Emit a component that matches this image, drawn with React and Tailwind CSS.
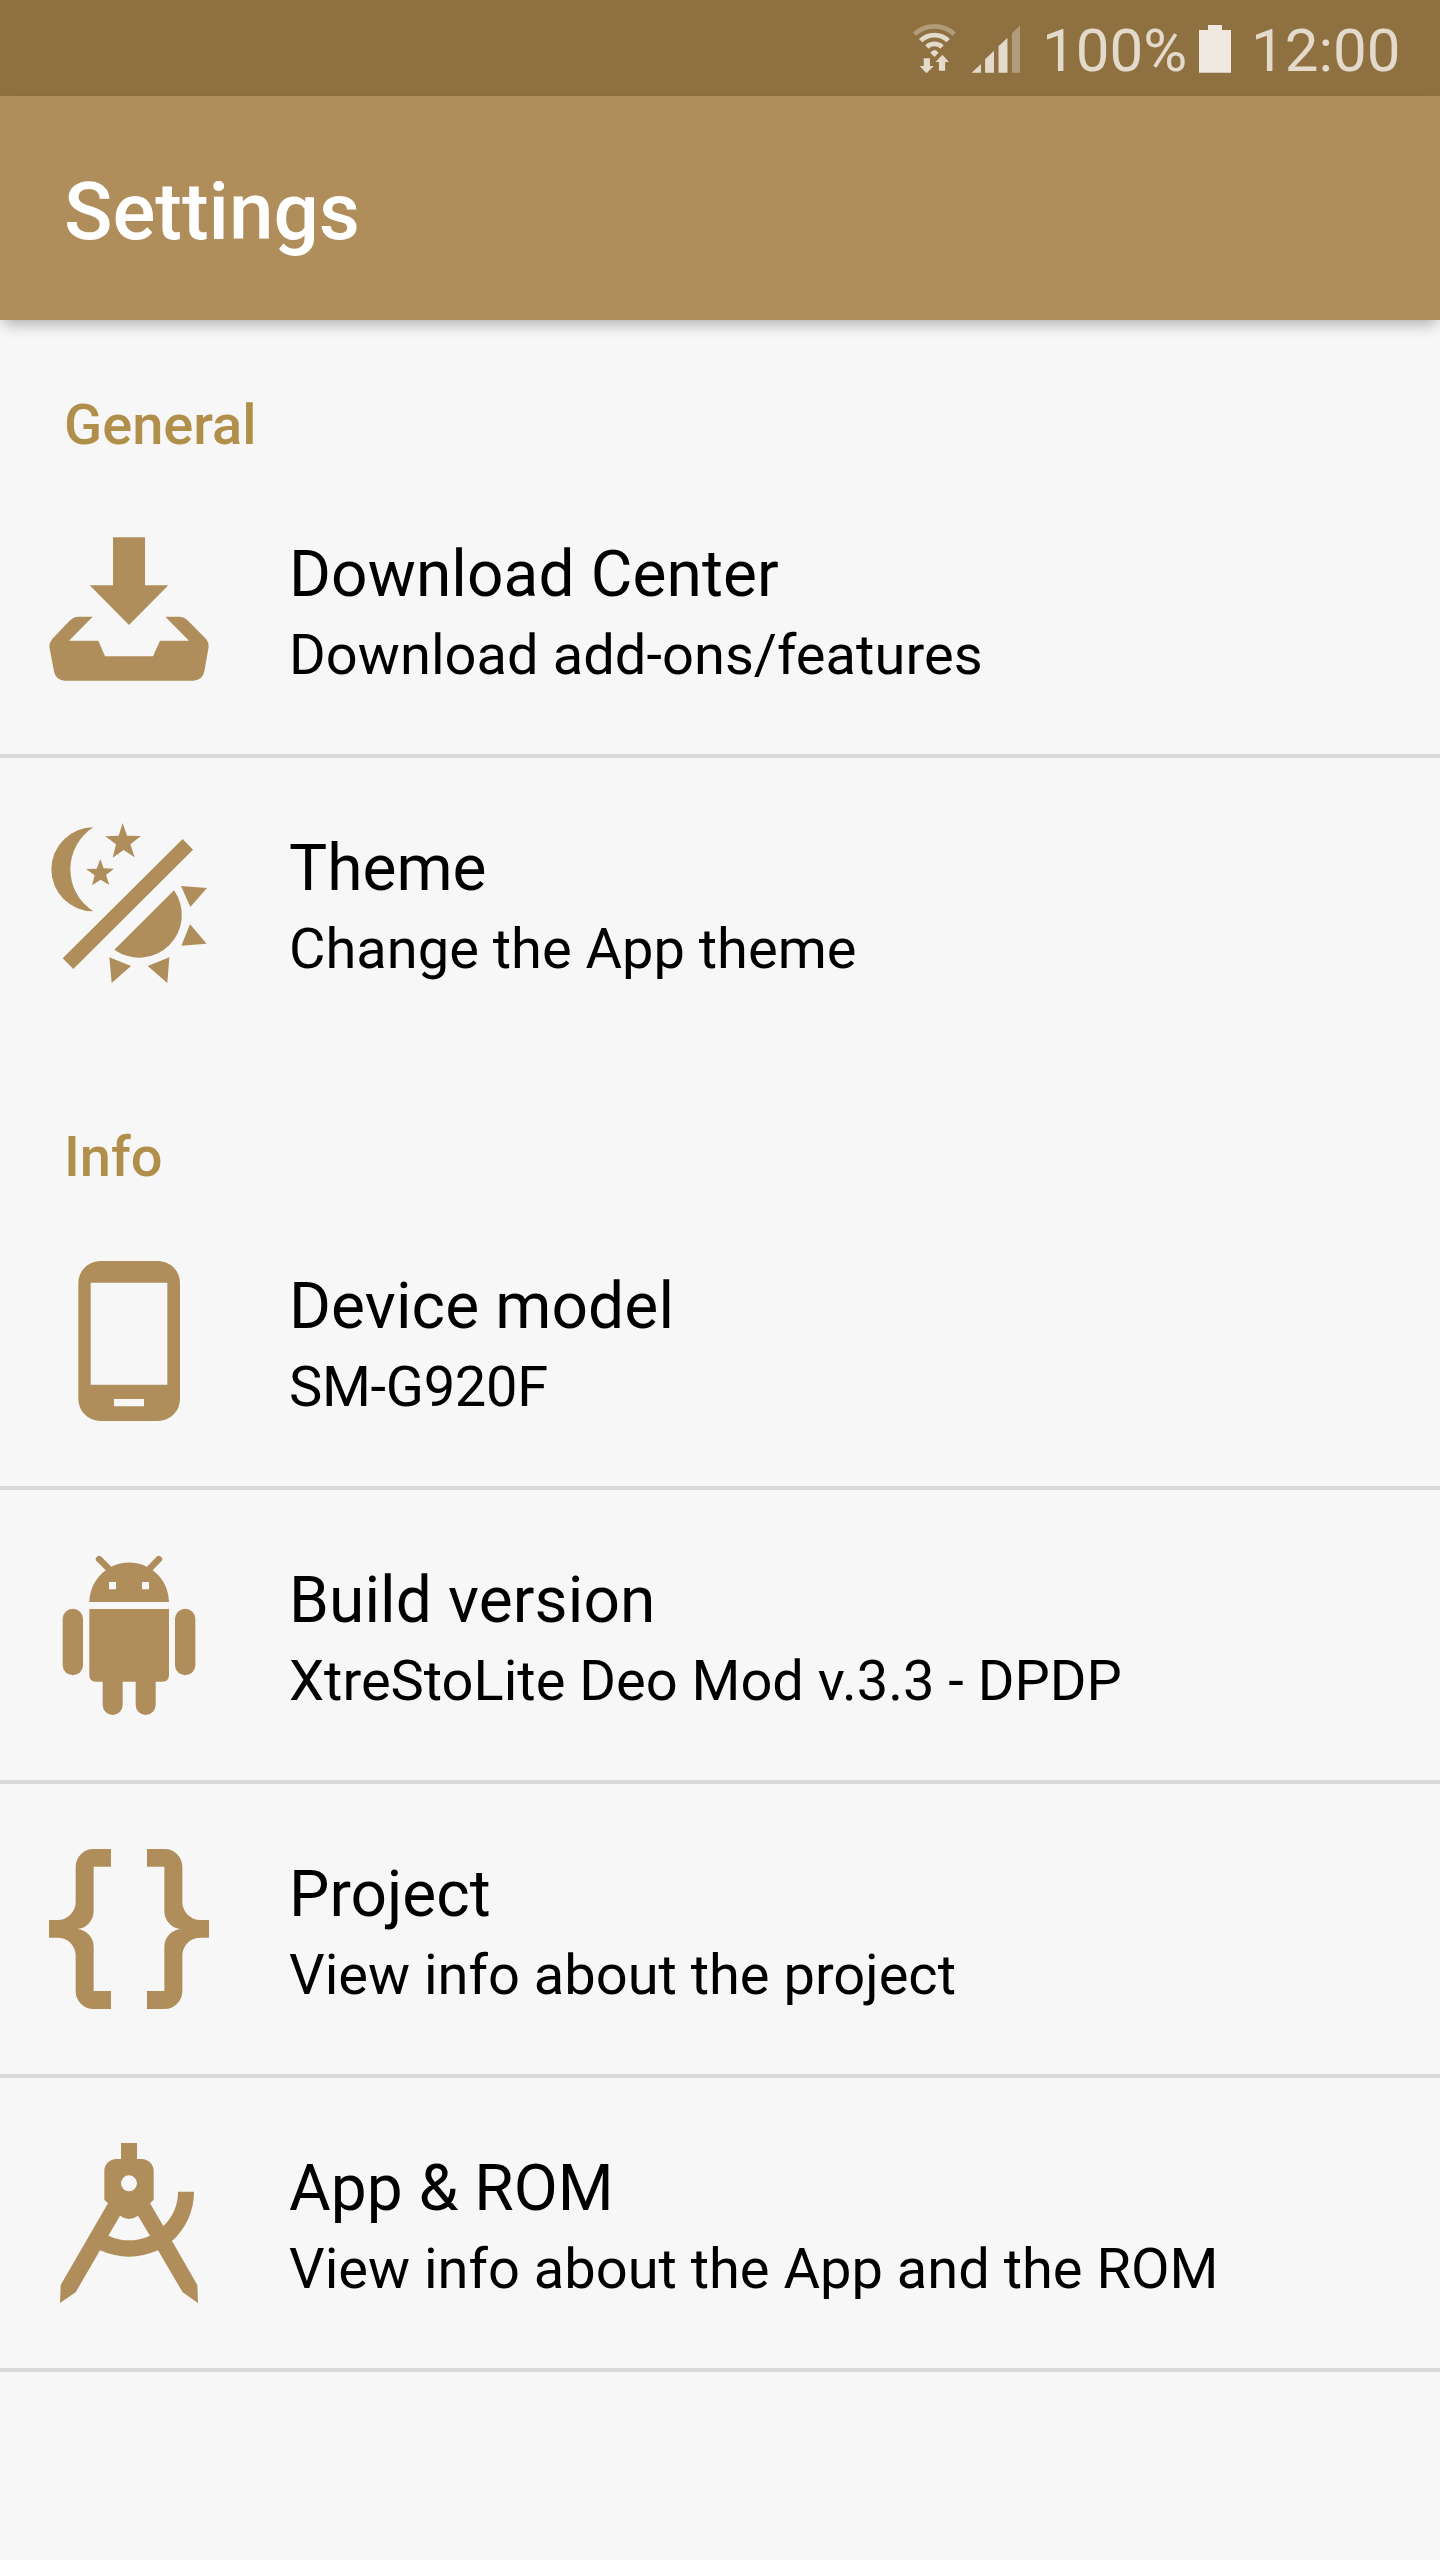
const ICONS = {
  download: {
    viewBox: "0 -6 600 600",
    art: (
      <>
        <path d="M249 82H345V226H415L297 345L179 226H249Z" />
        <path d="M188 320L117 392H205L225 439H369L390 392H477L406 320H446Q462 320 474 332L529 388Q537 398 536 411L523 484Q518 511 491 512H103Q77 510 72 484L58 411Q58 398 66 388L118 333Q131 320 146 320Z" />
      </>
    ),
  },
  theme: {
    viewBox: "0 6 600 600",
    art: (
      <>
        <path d="M190 82A126 126 0 1 0 190 334A149.5 149.5 0 0 1 190 82Z" />
        <path d="M278 69L291 107L333 108L301 133L314 172L281 150L248 173L258 133L226 109L266 107Z" />
        <path d="M211 177L221 205L252 206L228 225L238 255L212 239L186 256L194 226L168 207L200 206Z" />
        <path d="M458 117L489 149L130 507L98 475Z" />
        <path d="M432 271A128 128 0 0 1 253 449Z" />
        <path d="M453 258L531 264L481 321Z" />
        <path d="M480 373L530 431L454 437Z" />
        <path d="M238 472L303 498L245 549Z" />
        <path d="M418 472L412 549L353 498Z" />
      </>
    ),
  },
  phone: {
    viewBox: "0 0 600 600",
    art: (
      <path
        fillRule="evenodd"
        d="M211 63H384A66 66 0 0 1 450 129V477A66 66 0 0 1 384 543H211A66 66 0 0 1 145 477V129A66 66 0 0 1 211 63ZM182 128V434H412V128ZM252 477V499H342V477Z"
      />
    ),
  },
  android: {
    viewBox: "0 -3 600 600",
    art: (
      <>
        <path
          fillRule="evenodd"
          d="M178 201C179 163 197 128 227 106L200 79A9.500 9.500 0 0 1 215 66L244 95Q297 70 351 95L379 66A9.500 9.500 0 0 1 394 79L368 106C399 128 416 163 417 201ZM237 141V163H258V141ZM336 141V163H357V141Z"
        />
        <path d="M178 222H417V420Q417 440 397 440H377V510A30 30 0 0 1 317 510V440H278V510A30 30 0 0 1 218 510V440H198Q178 440 178 420Z" />
        <rect x="98" y="221" width="61" height="200" rx="30.500" />
        <rect x="435" y="221" width="61" height="200" rx="30.500" />
      </>
    ),
  },
  braces: {
    viewBox: "0 -6 600 600",
    art: (
      <>
        <path d="M243 57V110H191V244A54 54 0 0 1 141 297A54 54 0 0 1 191 350V483H243V537H190A53 53 0 0 1 137 484V376A54 54 0 0 0 83 323H57V270H83A54 54 0 0 0 137 217V110A53 53 0 0 1 190 57Z" />
        <path d="M351 57V110H403V244A54 54 0 0 0 453 297A54 54 0 0 0 403 350V483H351V537H404A53 53 0 0 0 457 484V376A54 54 0 0 1 511 323H537V270H511A54 54 0 0 1 457 217V110A53 53 0 0 0 404 57Z" />
      </>
    ),
  },
  compass: {
    viewBox: "0 -9 600 600",
    art: (
      <path
        fillRule="evenodd"
        d="M273 54H321V102H335A36 36 0 0 1 371 138V224L360 235L400 303C430 274 444 240 444 200H492C492 257 468 311 426 348L502 480L504 534L458 502L384 376Q297 414 210 376L137 502L90 534L92 480L234 235L223 224V138A36 36 0 0 1 259 102H273ZM297 151A24 24 0 1 0 297 199A24 24 0 1 0 297 151ZM270 272L235 332Q297 360 360 332L324 272Q297 292 270 272Z"
      />
    ),
  },
};

const SECTIONS = [
  {
    title: "General",
    rows: [
      {
        icon: "download",
        title: "Download Center",
        titleTracking: "tracking-[0.1px]",
        text: "Download add-ons/features",
        textTracking: "tracking-[0.05px]",
      },
      { icon: "theme", title: "Theme", text: "Change the App theme", plain: true },
    ],
  },
  {
    title: "Info",
    rows: [
      {
        icon: "phone",
        title: "Device model",
        titleTracking: "tracking-[0.12px]",
        text: "SM-G920F",
        textTracking: "tracking-[-0.28px]",
      },
      {
        icon: "android",
        title: "Build version",
        titleTracking: "tracking-[0.12px]",
        text: "XtreStoLite Deo Mod v.3.3 - DPDP",
      },
      { icon: "braces", title: "Project", text: "View info about the project" },
      { icon: "compass", title: "App & ROM", text: "View info about the App and the ROM" },
    ],
  },
];

function StatusBar() {
  return (
    <div className="flex h-24 items-start justify-end bg-[#8f7041] pr-[39px] text-[60px] leading-[70px] text-[#e3dacb]">
      <svg
        className="mr-[22px] h-24 w-[120px]"
        viewBox="0 0 348.4 288"
        preserveAspectRatio="none"
        fill="currentColor"
      >
        <g fill="none" stroke="currentColor" strokeWidth="14">
          <path d="M42.500 102.500A82.500 82.500 0 0 1 157.500 102.500" stroke="#b19b78" />
          <path d="M60 122A56 56 0 0 1 140 122" />
          <path d="M78 141A31 31 0 0 1 122 141" />
        </g>
        <path d="M88 158Q100 142 112 158L100 171Z" />
        <path d="M69 175H87V198H98L77 220L57 198H69Z" />
        <path d="M123 164L142 186H131V212H113V186H103Z" />
        <path d="M208 218.500L235 192V218.500Z" />
        <path d="M247 178L273 152V218.500H247Z" />
        <path d="M286 139L312 113V218.500H286Z" />
        <path d="M325 100L351 74V218.500H325Z" fill="#b19b78" />
      </svg>
      <span className="mt-[16px] w-[146px]">100%</span>
      <svg className="ml-2 mr-[19px] h-24 w-9" viewBox="0 0 36 96" fill="#eee8df">
        <path d="M3 30H12V25H26V30H35V72.700H3Z" />
      </svg>
      <span className="mt-[16px] w-[150px]">12:00</span>
    </div>
  );
}

function Row({ icon, title, titleTracking = "", text, textTracking = "", plain }) {
  const { viewBox, art } = ICONS[icon];
  return (
    <li
      className={
        plain
          ? "flex h-[294px] border-b-4 border-transparent pl-[30px]"
          : "flex h-[294px] border-b-4 border-[#d9d9d9] pl-[30px]"
      }
    >
      <svg className="mt-11 h-[200px] w-[200px] shrink-0" viewBox={viewBox} fill="#af8e5b">
        {art}
      </svg>
      <div className="ml-[59px] pt-[73px] whitespace-nowrap text-black">
        <div className={"text-[64px] leading-[75px] " + titleTracking}>{title}</div>
        <div className={"mt-[10px] text-[56px] leading-[66px] " + textTracking}>{text}</div>
      </div>
    </li>
  );
}

export default function App() {
  return (
    <div className="h-[2560px] w-[1440px] overflow-hidden bg-[#f7f7f7] font-['Roboto',sans-serif]">
      <StatusBar />
      <header className="h-[224px] bg-[#af8e5b] pl-16 pt-[69px] shadow-[0_8px_14px_-4px_rgba(0,0,0,0.31)]">
        <h1 className="text-[80px] leading-[94px] font-medium text-white">Settings</h1>
      </header>
      <main>
        {SECTIONS.map((section) => (
          <section key={section.title}>
            <h2 className="h-36 pl-16 pt-[72px] text-[56px] leading-[66px] font-medium text-[#b08f4a]">
              {section.title}
            </h2>
            <ul>
              {section.rows.map((row) => (
                <Row key={row.title} {...row} />
              ))}
            </ul>
          </section>
        ))}
      </main>
    </div>
  );
}
